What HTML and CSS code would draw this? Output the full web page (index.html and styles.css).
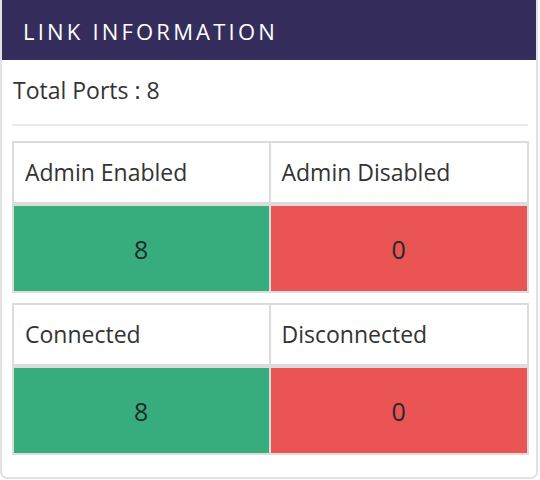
FILE: index.html
```html
<!DOCTYPE html>
<html>
<head>
<meta charset="utf-8">
<link rel="stylesheet" href="styles.css">
</head>
<body>
<div class="card">
  <div class="card-header">LINK INFORMATION</div>
  <div class="card-body">
    <div class="total">Total Ports : 8</div>
    <div class="divider"></div>
    <div class="stat-table">
      <div class="cell head">Admin Enabled</div>
      <div class="cell head">Admin Disabled</div>
      <div class="cell value ok">8</div>
      <div class="cell value bad">0</div>
    </div>
    <div class="stat-table">
      <div class="cell head">Connected</div>
      <div class="cell head">Disconnected</div>
      <div class="cell value ok">8</div>
      <div class="cell value bad">0</div>
    </div>
  </div>
</div>
</body>
</html>
```
FILE: styles.css
```css
html, body {
  margin: 0;
  padding: 0;
  background: #ffffff;
}
body {
  font-family: "Open Sans", "Noto Sans", sans-serif;
  color: #333;
}
.card {
  box-sizing: border-box;
  width: 538px;
  height: 479px;
  border: 2px solid #e2e2e2;
  border-top: none;
  border-radius: 0 0 7px 7px;
  background: #fff;
  display: flex;
  flex-direction: column;
}
.card-header {
  height: 60px;
  background: #352e5d;
  color: #fff;
  font-size: 22px;
  letter-spacing: 3.2px;
  display: flex;
  align-items: center;
  padding-left: 21px;
  padding-top: 1px;
  box-sizing: border-box;
}
.card-body {
  padding: 0 8px 0 10px;
}
.total {
  font-size: 23px;
  padding-left: 1px;
  height: 64px;
  display: flex;
  align-items: center;
  padding-bottom: 4px;
  box-sizing: border-box;
  color: #333;
}
.divider {
  height: 2px;
  background: #ebebeb;
  margin-bottom: 15px;
}
.stat-table {
  display: grid;
  grid-template-columns: 1fr 1fr;
  border: 2px solid #dcdcdc;
  margin-bottom: 10px;
  width: 517px;
  box-sizing: border-box;
}
.cell {
  box-sizing: border-box;
}
.cell:nth-child(odd) {
  border-right: 2px solid #dcdcdc;
}
.head {
  height: 63px;
  border-bottom: 4px solid #dcdcdc;
  font-size: 23px;
  display: flex;
  align-items: center;
  padding-left: 11px;
  padding-bottom: 2px;
}
.value {
  height: 85px;
  font-size: 25px;
  display: flex;
  align-items: center;
  justify-content: center;
  color: #232a27;
}
.ok { background: #37ad7d; }
.bad { background: #eb5454; }
```
